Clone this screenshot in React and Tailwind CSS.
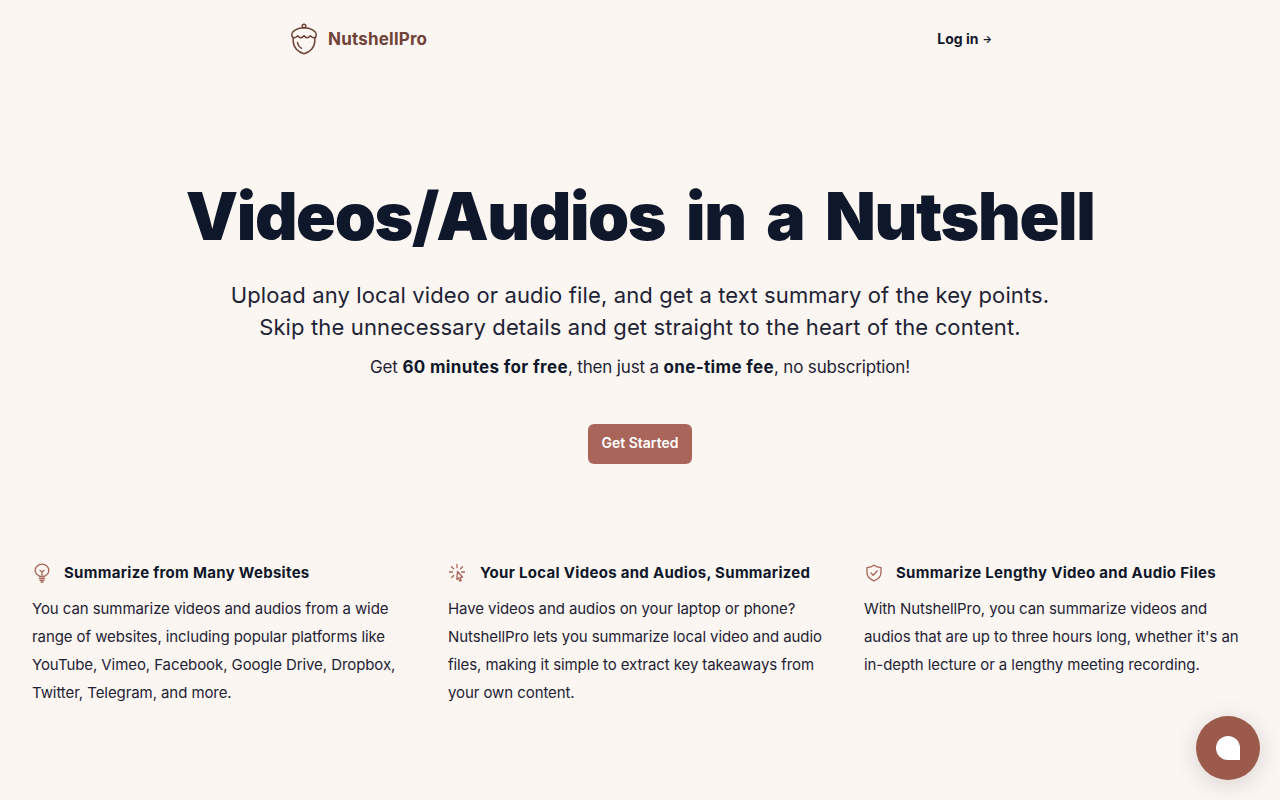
import React from 'react';

const BulbIcon = () => (
  <svg width="20" height="20" viewBox="0 0 20 20" fill="none" stroke="#a9655a" strokeWidth="1.3" strokeLinecap="round" strokeLinejoin="round">
    <path d="M7.300 13.500v-.7C5.300 11.900 3.200 10.100 3.200 7.400 3.200 3.800 6.200 1.200 10 1.200s6.800 2.600 6.800 6.200c0 2.700-2.100 4.500-4.100 5.400v.7Z" />
    <path d="M10 13.300V8.500M8 7.500l2 1.500 2-1.500" />
    <path d="M7.500 15.500h5M8 17.300h4M9 19h2" />
  </svg>
);

const ClickIcon = () => (
  <svg width="20" height="20" viewBox="0 0 20 20" fill="none" stroke="#a9655a" strokeWidth="1.3" strokeLinecap="round" strokeLinejoin="round">
    <path d="M9.500 8.500l5 5.500-2.500.3 1.300 3.200-1.500.7-1.300-3.300-1.700 1.500Z" />
    <path d="M9 1.500v3M3.500 3.700l2 2M1.500 9h3M3.700 14.500l2-2M14.500 3.700l-2 2M16.500 9h-3" />
  </svg>
);

const ShieldIcon = () => (
  <svg width="20" height="20" viewBox="0 0 20 20" fill="none" stroke="#a9655a" strokeWidth="1.3" strokeLinecap="round" strokeLinejoin="round">
    <path d="M10 2.200c2 1.500 4 2.200 7 2.400v5.200c0 4-3 6.500-7 8-4-1.500-7-4-7-8V4.600c3-.2 5-.9 7-2.400Z" />
    <path d="M7 10l2.200 2.200L13.200 8" />
  </svg>
);

const features = [
  {
    icon: BulbIcon,
    title: 'Summarize from Many Websites',
    text: 'You can summarize videos and audios from a wide range of websites, including popular platforms like YouTube, Vimeo, Facebook, Google Drive, Dropbox, Twitter, Telegram, and more.',
  },
  {
    icon: ClickIcon,
    title: 'Your Local Videos and Audios, Summarized',
    text: 'Have videos and audios on your laptop or phone? NutshellPro lets you summarize local video and audio files, making it simple to extract key takeaways from your own content.',
  },
  {
    icon: ShieldIcon,
    title: 'Summarize Lengthy Video and Audio Files',
    text: "With NutshellPro, you can summarize videos and audios that are up to three hours long, whether it's an in-depth lecture or a lengthy meeting recording.",
  },
];

const AcornLogo = () => (
  <svg width="28" height="32" viewBox="0 0 28 32" fill="none" stroke="#6f4339" strokeWidth="1.500" strokeLinecap="round" strokeLinejoin="round">
    <circle cx="14" cy="3" r="1.800" />
    <path d="M1.800 12C1.800 7.800 7.500 4.800 14 4.800S26.200 7.800 26.200 12c0 1.700-1 2.800-2.300 2.800-1.700 0-2.700-1.200-3.500-2-.9 1.100-2.200 2-3.400 2-1.200 0-2.200-.9-3-2-.8 1.100-1.800 2-3 2-1.200 0-2.500-.9-3.400-2-.8.800-1.800 2-3.500 2-1.300 0-2.300-1.100-2.300-2.800Z" />
    <path d="M3.200 14.500v3.500c0 6.500 5 11 10.800 12.700 5.800-1.700 10.800-6.200 10.800-12.700v-3.500" />
    <path d="M7.500 19.500c.4 2.500 1.800 4.500 4 5.800" />
  </svg>
);

export default function App() {
  return (
    <div className="min-h-[800px] bg-[#fbf6f1] text-[#0f172a] font-['Inter',sans-serif] overflow-hidden">
      <nav className="flex items-center justify-between pl-[290px] pr-[288px] pt-[14px] h-[72px] pb-[8px]">
        <a className="flex items-center gap-[10px]">
          <AcornLogo />
          <span className="pt-[2px] text-[17px] font-bold text-[#6f4339] tracking-[0.2px]">NutshellPro</span>
        </a>
        <a className="text-sm font-bold flex items-center gap-[4px]">
          Log in <span className="text-[10px] font-bold">→</span>
        </a>
      </nav>

      <main className="flex flex-col items-center text-center pt-[104px]">
        <h1 className="text-[66px] leading-[80px] font-black tracking-[-1.4px] [word-spacing:9px]">Videos/Audios in a Nutshell</h1>
        <p className="mt-[23px] text-[22px] leading-[32px] tracking-[0.13px] text-[#1e2235]">
          Upload any local video or audio file, and get a text summary of the key points.
          <br />
          Skip the unnecessary details and get straight to the heart of the content.
        </p>
        <p className="mt-[12px] text-[17px] leading-[24px] tracking-[-0.16px] text-[#1e2235]">
          Get <strong className="font-bold tracking-[0.35px] text-[#0f172a]">60 minutes for free</strong>, then just a{' '}
          <strong className="font-bold tracking-[0.35px] text-[#0f172a]">one-time fee</strong>, no subscription!
        </p>
        <button className="mt-[45px] h-[40px] w-[104px] pb-[2px] rounded-md bg-[#a9655a] text-sm font-semibold text-white">
          Get Started
        </button>
      </main>

      <section className="grid grid-cols-3 gap-8 px-8 mt-[93px]">
        {features.map((f) => (
          <div key={f.title}>
            <div className="flex items-center gap-[12px] h-[32px]">
              <f.icon />
              <h3 className="text-[15px] font-bold tracking-[0.3px]">{f.title}</h3>
            </div>
            <p className="mt-[6px] text-[15px] leading-[28px] tracking-[-0.08px] text-[#1e2235]">{f.text}</p>
          </div>
        ))}
      </section>

      <button className="fixed right-[20px] bottom-[20px] w-[64px] h-[64px] rounded-full bg-[#9c5a4d] flex items-center justify-center shadow-[0_4px_24px_rgba(0,0,0,0.15)]">
        <span className="block w-[24px] h-[24px] bg-white rounded-t-full rounded-bl-full" />
      </button>
    </div>
  );
}
